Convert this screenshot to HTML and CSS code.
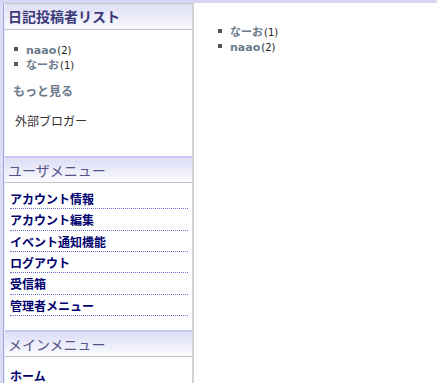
FILE: index.html
```html
<!DOCTYPE html>
<html lang="ja">
<head>
	<meta charset="UTF-8">
	<title>日記</title>
	<link rel="stylesheet" href="styles.css">
</head>
<body>
	<div class="page">
		<div class="side">
			<div class="block first">
				<div class="block-head">日記投稿者リスト</div>
				<div class="block-body bloggers">
					<ul class="users">
						<li><a href="#">naao</a><span class="count">(2)</span></li>
						<li><a href="#">なーお</a><span class="count">(1)</span></li>
					</ul>
					<p class="more"><a href="#">もっと見る</a></p>
					<p class="outer">外部ブロガー</p>
				</div>
			</div>
			<div class="block">
				<div class="block-head light">ユーザメニュー</div>
				<ul class="block-body menu">
					<li><a href="#">アカウント情報</a></li>
					<li><a href="#">アカウント編集</a></li>
					<li><a href="#">イベント通知機能</a></li>
					<li><a href="#">ログアウト</a></li>
					<li><a href="#">受信箱</a></li>
					<li><a href="#">管理者メニュー</a></li>
				</ul>
			</div>
			<div class="block">
				<div class="block-head light">メインメニュー</div>
				<ul class="block-body menu main-menu">
					<li><a href="#">ホーム</a></li>
				</ul>
			</div>
		</div>
		<div class="content">
			<ul class="users">
				<li><a href="#">なーお</a><span class="count">(1)</span></li>
				<li><a href="#">naao</a><span class="count">(2)</span></li>
			</ul>
		</div>
	</div>
</body>
</html>
```
FILE: styles.css
```css
body {
	margin: 0;
	font-family: "DejaVu Sans", "Noto Sans CJK JP", sans-serif;
	font-size: 12px;
	color: #222;
	background: #fff;
	overflow: hidden;
}
ul {
	list-style: none;
	margin: 0;
	padding: 0;
}
p {
	margin: 0;
}
a {
	text-decoration: none;
}
.page {
	display: flex;
	border-top: 3px solid #d6d6f4;
	height: 380px;
}
.side {
	width: 194px;
	flex: none;
	box-sizing: border-box;
	padding-left: 5px;
	border-right: 2px solid #d2d2d2;
	background: linear-gradient(to right, #dcdcf6 0 3px, #a4a4dc 3px 4px, #eeeefa 4px 5px, #fff 5px);
}
.block-head {
	height: 24px;
	line-height: 24px;
	padding-left: 3px;
	border-top: 2px solid #c8c8f0;
	border-bottom: 1px solid #c4c4c4;
	background: linear-gradient(#dedef6, #ececfa 50%, #fbfbff);
	font-family: "Noto Sans CJK JP", sans-serif;
	font-size: 14px;
	font-weight: bold;
	color: #3a3a78;
}
.first .block-head {
	height: 25px;
	line-height: 25px;
	border-top: 1px solid #c4c4c4;
}
.block-head.light {
	font-weight: normal;
	color: #55558a;
}
.bloggers {
	height: 126px;
	box-sizing: border-box;
	padding: 13px 0 0 8px;
}
.users li {
	line-height: 15px;
	height: 15px;
}
.users li::before {
	content: "";
	display: inline-block;
	width: 4px;
	height: 4px;
	background: #555;
	margin: 0 8px 0 1px;
	vertical-align: 3px;
}
.users a {
	font-size: 11px;
	font-weight: bold;
	color: #6b7b8c;
}
.count {
	font-size: 10px;
	color: #222;
	margin-left: 1px;
}
.more {
	margin-top: 10px;
	line-height: 15px;
}
.more a {
	font-family: "Noto Sans CJK JP", sans-serif;
	font-size: 12px;
	font-weight: bold;
	color: #6b7b8c;
}
.outer {
	margin-top: 13px;
	margin-left: 2px;
	line-height: 15px;
	font-family: "Noto Sans CJK JP", sans-serif;
	font-size: 12px;
	color: #333;
}
.menu {
	padding: 5px 4px 14px 5px;
	font-family: "Noto Sans CJK JP", sans-serif;
	font-size: 12px;
}
.menu li {
	height: 20.33px;
	line-height: 21px;
	overflow: hidden;
	border-bottom: 1px dotted #6a6ad0;
}
.menu a {
	font-weight: bold;
	color: #00006e;
}
.main-menu {
	padding-top: 8px;
}
.main-menu li {
	border-bottom: none;
}
.content {
	flex: 1;
	padding: 22px 0 0 23px;
}
```
